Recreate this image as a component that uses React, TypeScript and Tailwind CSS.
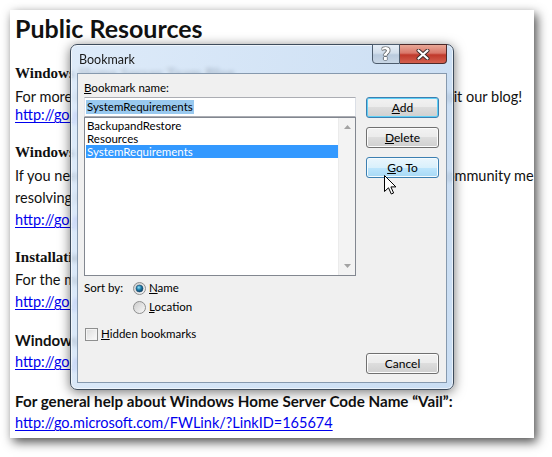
import React from "react";

const docFont = { fontFamily: "Lato, 'Open Sans', sans-serif" };
const serifFont = { fontFamily: "'Liberation Serif', 'DejaVu Serif', serif" };
const uiFont = { fontFamily: "Lato, 'Noto Sans', sans-serif" };

function Link({ children, className = "" }: { children: React.ReactNode; className?: string }) {
  return <div className={`whitespace-nowrap text-[#0000ee] underline underline-offset-2 ${className}`}>{children}</div>;
}

function Document() {
  return (
    <div
      className="w-[524px] h-[428px] bg-white overflow-hidden pl-[5px] pt-[3px] text-[14.5px] text-[#111] shadow-[3px_4px_10px_rgba(0,0,0,0.7)]"
      style={docFont}
    >
      <div className="text-[25px] font-bold leading-[30px] whitespace-nowrap">Public Resources</div>

      <div className="mt-[19px] leading-[22px] font-bold text-[15px] whitespace-nowrap" style={serifFont}>
        Windows Home Server Team Blog
      </div>
      <div className="mt-[4px] leading-[18px] whitespace-nowrap">
        For more information and the news about Windows Home Server, visit our blog!
      </div>
      <Link className="leading-[18px]">http://go.microsoft.com/FWLink/?LinkID=164831</Link>

      <div className="mt-[17px] leading-[22px] font-bold text-[15px] whitespace-nowrap" style={serifFont}>
        Windows Home Server Forums
      </div>
      <div className="mt-[2px] leading-[22px] whitespace-nowrap">
        If you need help or have questions, post them in the forums where community members
      </div>
      <div className="leading-[22px] whitespace-nowrap">resolving issues and sharing tips can help you out.</div>
      <Link className="leading-[22px]">http://go.microsoft.com/FWLink/?LinkID=164832</Link>

      <div className="mt-[15px] leading-[22px] font-bold text-[15px] whitespace-nowrap" style={serifFont}>
        Installation Guide
      </div>
      <div className="mt-[1px] leading-[22px] whitespace-nowrap">For the most recent installation instructions, see the guide.</div>
      <Link className="leading-[22px]">http://go.microsoft.com/FWLink/?LinkID=164833</Link>

      <div className="mt-[16px] leading-[22px] font-bold text-[15px] whitespace-nowrap">Windows Home Server Help and How-to</div>
      <Link className="leading-[22px]">http://go.microsoft.com/FWLink/?LinkID=164834</Link>

      <div className="mt-[17px] leading-[22px] font-bold text-[15.2px] whitespace-nowrap">
        For general help about Windows Home Server Code Name “Vail”:
      </div>
      <Link className="leading-[22px]">http://go.microsoft.com/FWLink/?LinkID=165674</Link>
    </div>
  );
}

function Button({ children, kind = "normal" }: { children: React.ReactNode; kind?: "normal" | "default" | "hover" }) {
  const styles = {
    normal:
      "border-[#707070] bg-[linear-gradient(#f2f2f2_0%,#ebebeb_50%,#dddddd_50%,#cfcfcf_100%)] shadow-[inset_0_0_0_1px_#fcfcfc]",
    default:
      "border-[#3c7fb1] bg-[linear-gradient(#f2f2f2_0%,#ebebeb_50%,#dddddd_50%,#cfcfcf_100%)] shadow-[inset_0_0_0_1px_#5fd0f6]",
    hover:
      "border-[#3c7fb1] bg-[linear-gradient(#eaf6fd_0%,#d9f0fc_50%,#bee6fd_50%,#a7d9f5_100%)] shadow-[inset_0_0_0_1px_#f4fbfe]",
  }[kind];
  return (
    <div className={`h-[21px] w-[73px] rounded-[3px] border flex items-center justify-center text-[12px] text-black ${styles}`}>
      {children}
    </div>
  );
}

function Radio({ checked }: { checked?: boolean }) {
  return (
    <svg width="13" height="13" viewBox="0 0 13 13">
      <defs>
        <linearGradient id="rbg" x1="0" y1="0" x2="1" y2="1">
          <stop offset="0" stopColor="#c9c9c9" />
          <stop offset="1" stopColor="#fbfbfb" />
        </linearGradient>
        <radialGradient id="rdot" cx="0.4" cy="0.35" r="0.7">
          <stop offset="0" stopColor="#8fe0f7" />
          <stop offset="0.5" stopColor="#1b7aa8" />
          <stop offset="1" stopColor="#0a3a5c" />
        </radialGradient>
      </defs>
      <circle cx="6.5" cy="6.5" r="6" fill="url(#rbg)" stroke="#8e8f8f" />
      {checked && <circle cx="6.5" cy="6.5" r="3.5" fill="url(#rdot)" stroke="#1b4a6e" strokeWidth="0.6" />}
    </svg>
  );
}

function Dialog() {
  return (
    <div className="absolute left-[70px] top-[44px] w-[384px] h-[346px] rounded-[7px] border border-[#3e4c5c] bg-[linear-gradient(100deg,rgba(214,230,248,0.82),rgba(190,214,240,0.82))] backdrop-blur-[2px] shadow-[0_2px_12px_rgba(0,0,0,0.55),inset_0_0_0_1px_rgba(255,255,255,0.6)] flex flex-col" style={uiFont}>
      {/* title bar */}
      <div className="h-[28px] flex items-start justify-between pl-[8px] pr-[6px]">
        <div className="pt-[6px] text-[12.5px] text-[#1a1a1a]">Bookmark</div>
        <div className="flex -mt-px">
          <div className="w-[28px] h-[20px] rounded-bl-[4px] border border-[#4d5c6d] bg-[linear-gradient(#e6eef7_0%,#d2deeb_45%,#b9cadd_55%,#c9d7e6_100%)] flex items-center justify-center">
            <span className="text-[17px] font-black text-white leading-none [text-shadow:0_0_1px_#222,0_0_1px_#222,0_0_1px_#222,0_0_1px_#222]" style={{ fontFamily: "'DejaVu Sans', sans-serif" }}>?</span>
          </div>
          <div className="w-[47px] h-[20px] rounded-br-[4px] border border-l-0 border-[#4d2a2a] bg-[linear-gradient(#e9a897_0%,#d9776a_45%,#c0392b_55%,#d4604f_100%)] flex items-center justify-center">
            <svg width="14" height="11" viewBox="0 0 14 11">
              <path d="M2.5 1.5 L11.5 9.5 M11.5 1.5 L2.5 9.5" stroke="#3a2a2a" strokeWidth="4" strokeLinecap="round" />
              <path d="M2.5 1.5 L11.5 9.5 M11.5 1.5 L2.5 9.5" stroke="#ffffff" strokeWidth="2.2" strokeLinecap="round" />
            </svg>
          </div>
        </div>
      </div>

      {/* client area */}
      <div className="mx-[6px] mb-[6px] flex-1 border border-[#8699ae] bg-[#f0f0f0] flex pt-[6px] pl-[6px] pr-[7px] pb-[8px] text-[11.5px] text-black">
        <div className="w-[272px] flex flex-col">
          <div className="leading-[15px] h-[15px]">
            <span className="underline underline-offset-1">B</span>ookmark name:
          </div>
          <div className="mt-[2px] h-[20px] border border-[#abadb3] border-l-[#e2e3ea] border-r-[#dbdfe6] bg-white flex items-center pl-px">
            <span className="bg-[#99c9ef] leading-[14px] px-px">SystemRequirements</span>
          </div>
          <div className="h-[159px] border border-[#828790] bg-white flex">
            <div className="flex-1 pt-[1px] pl-px">
              <div className="leading-[13px] h-[13px] px-px">BackupandRestore</div>
              <div className="leading-[13px] h-[13px] px-px">Resources</div>
              <div className="leading-[13px] h-[13px] px-px bg-[#3399ff] text-white">SystemRequirements</div>
            </div>
            <div className="w-[17px] bg-[#f3f3f3] border-l border-[#ebebeb] flex flex-col justify-between items-center py-[7px]">
              <svg width="7" height="4" viewBox="0 0 7 4">
                <path d="M0 4 L3.5 0 L7 4 Z" fill="#a3a3a3" />
              </svg>
              <svg width="7" height="4" viewBox="0 0 7 4">
                <path d="M0 0 L3.5 4 L7 0 Z" fill="#a3a3a3" />
              </svg>
            </div>
          </div>

          <div className="mt-[4px] flex items-center h-[16px]">
            <div className="w-[49px]">Sort by:</div>
            <Radio checked />
            <div className="ml-[3px]">
              <span className="underline underline-offset-1">N</span>ame
            </div>
          </div>
          <div className="mt-[3px] flex items-center h-[16px] pl-[49px]">
            <Radio />
            <div className="ml-[3px]">
              <span className="underline underline-offset-1">L</span>ocation
            </div>
          </div>

          <div className="mt-[11px] flex items-center h-[16px] pl-px">
            <div className="w-[13px] h-[13px] border border-[#8e8f8f] bg-[linear-gradient(135deg,#dcdcdc,#fbfbfb)] shadow-[inset_0_0_0_1px_#f4f4f4]" />
            <div className="ml-[3px]">
              <span className="underline underline-offset-1">H</span>idden bookmarks
            </div>
          </div>
        </div>

        <div className="ml-[10px] flex flex-col">
          <div className="mt-[17px]">
            <Button kind="default">
              <span className="underline underline-offset-1">A</span>dd
            </Button>
          </div>
          <div className="mt-[9px]">
            <Button>
              <span className="underline underline-offset-1">D</span>elete
            </Button>
          </div>
          <div className="mt-[9px]">
            <Button kind="hover">
              <span className="underline underline-offset-1">G</span>o To
            </Button>
          </div>
          <div className="mt-auto">
            <Button>Cancel</Button>
          </div>
        </div>
      </div>
    </div>
  );
}

function Cursor() {
  return (
    <svg className="absolute left-[384px] top-[175px]" width="13" height="20" viewBox="0 0 13 20">
      <path d="M0.5 0.5 L0.5 16.5 L4.5 12.8 L7.3 19 L9.6 18 L6.9 11.9 L11.9 11.9 Z" fill="#fff" stroke="#000" strokeWidth="1" strokeLinejoin="miter" />
    </svg>
  );
}

export default function App() {
  return (
    <div className="relative w-[552px] h-[457px] bg-white overflow-hidden pl-[10px] pt-[10px]">
      <Document />
      <Dialog />
      <Cursor />
    </div>
  );
}
